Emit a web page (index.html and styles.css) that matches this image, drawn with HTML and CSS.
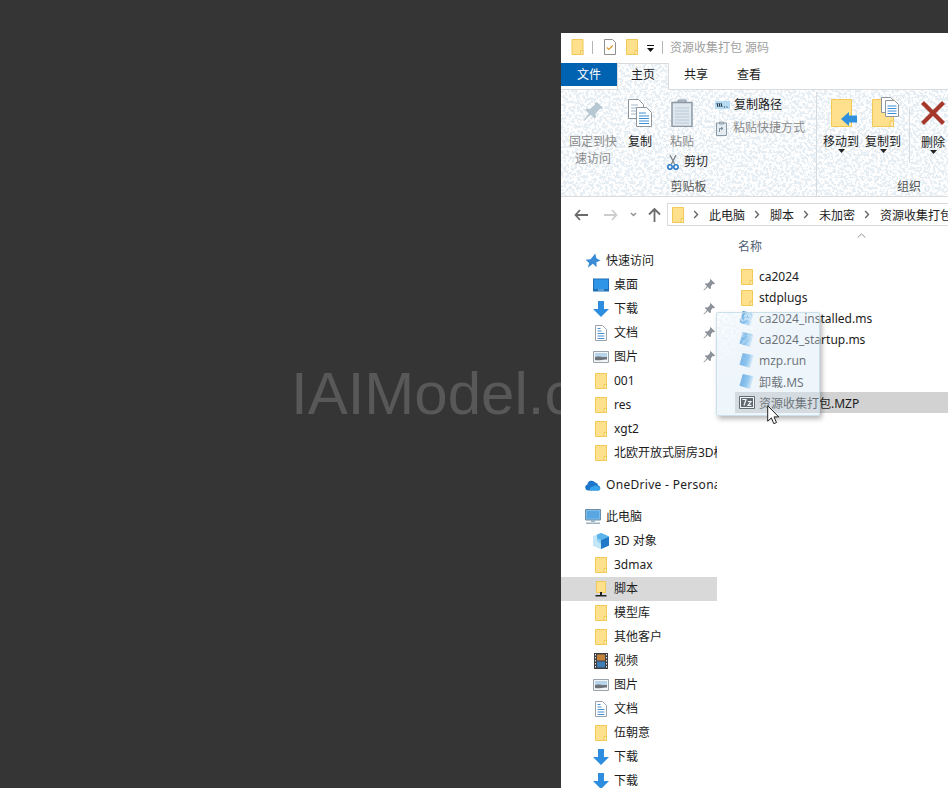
FILE: index.html
```html
<!DOCTYPE html>
<html lang="zh">
<head>
<meta charset="utf-8">
<title>资源收集打包 源码</title>
<link rel="stylesheet" href="styles.css">
</head>
<body>
<svg class="defs" width="0" height="0" aria-hidden="true">
  <defs>
    <filter id="speck" x="0" y="0" width="100%" height="100%" color-interpolation-filters="sRGB">
      <feTurbulence type="fractalNoise" baseFrequency="0.36" numOctaves="2" seed="7"/>
      <feColorMatrix values="0 0 0 0 1  0 0 0 0 1  0 0 0 0 1  16 0 0 0 -7.4"/>
    </filter>
    <linearGradient id="msBlue" x1="0" y1="0" x2="1" y2="0.3">
      <stop offset="0" stop-color="#1f7fd2"/>
      <stop offset="0.65" stop-color="#5fb0ea"/>
      <stop offset="1" stop-color="#e0eff9"/>
    </linearGradient>
    <symbol id="folder" viewBox="0 0 12 16">
      <path d="M.5.5h11v15H.5z" fill="#ffe08d" stroke="#f0c957"/>
      <path d="M9 11.5h2.500v4H9z" fill="#fdeab3" stroke="#f0c957"/>
    </symbol>
    <symbol id="star" viewBox="0 0 14 14">
      <path d="M9 .5l1 4.200 3.500 1.800-3.500 1.700.2 4.300-3.300-3L2.500 13 3.600 8.700 .5 6l4.300-.5z" fill="#3a8bd6"/>
    </symbol>
    <symbol id="desktop" viewBox="0 0 16 13">
      <path d="M0 0h16v13H0z" fill="#1d6fb8"/>
      <path d="M1 1h14v9.500H1z" fill="#2f95e6"/>
      <path d="M5 11h6v1H5z" fill="#9ccbef"/>
    </symbol>
    <symbol id="down" viewBox="0 0 16 16">
      <path d="M5 0h6v8h5l-8 8-8-8h5z" fill="#2f8de0"/>
    </symbol>
    <symbol id="doc" viewBox="0 0 12 16">
      <path d="M.5.500h7l4 4v11H.5z" fill="#fff" stroke="#9aa3ab"/>
      <path d="M2.500 3h3v1h-3zM2.500 5.500h4v1h-4zM2.500 8h7v1h-7zM2.500 10.500h7v1h-7zM2.500 13h7v1h-7z" fill="#4d92cf"/>
    </symbol>
    <symbol id="pics" viewBox="0 0 16 12">
      <path d="M.5.500h15v11H.5z" fill="#f2f5f7" stroke="#9aa3aa"/>
      <path d="M2 2h12v4H2z" fill="#b7d4ea"/>
      <path d="M2 6c3-1.500 6 .5 12 0v2.500C10 8 6 10 2 9z" fill="#6d7378"/>
    </symbol>
    <symbol id="cloud" viewBox="0 0 16 12">
      <path d="M3 11.500a3 3 0 0 1-.6-5.900 4.300 4.300 0 0 1 7.800-2.100 3.400 3.400 0 0 1 3 3 2.600 2.600 0 0 1 .3 5z" fill="#1d76c9"/>
      <path d="M5 11.500c-1-2 .8-4 3-4 1-1.500 5-1.500 5 0 2.800 0 3.200 3.600.6 4z" fill="#36a3ea"/>
    </symbol>
    <symbol id="pc" viewBox="0 0 16 16">
      <path d="M.5.500h15v10.500H.5z" fill="#7fbbe9" stroke="#6b8ea8"/>
      <path d="M2 2h12v7.500H2z" fill="#58a6e2"/>
      <path d="M6 11h4v2H6zM1 13.500h14v1.500H1z" fill="#9fb4c3"/>
    </symbol>
    <symbol id="cube" viewBox="0 0 16 16">
      <path d="M8 0l8 3.500v9L8 16 0 12.500v-9z" fill="#8fd0f3"/>
      <path d="M8 7l8-3.500v9L8 16z" fill="#1f78c8"/>
      <path d="M8 0l8 3.500L8 7 4 5.300V1.700z" fill="#5cb3ea"/>
      <path d="M0 3.500l4-1.800V8l4 3v5l-8-3.500z" fill="#c4e7f8"/>
    </symbol>
    <symbol id="netfolder" viewBox="0 0 12 16">
      <path d="M1.500.500h9v11h-9z" fill="#ffe08d" stroke="#f0c957"/>
      <path d="M5 11h2v3H5zM.5 14h11v1.500H.5z" fill="#222"/>
    </symbol>
    <symbol id="film" viewBox="0 0 14 16">
      <path d="M0 0h14v16H0z" fill="#3b3f44"/>
      <path d="M3 1.500h8v6H3z" fill="#c4823a"/>
      <path d="M3 8.500h8v6H3z" fill="#3f7fb5"/>
      <path d="M1 1h1v1.500H1zM1 4h1v1.500H1zM1 7h1v1.500H1zM1 10h1v1.500H1zM1 13h1v1.500H1zM12 1h1v1.500h-1zM12 4h1v1.500h-1zM12 7h1v1.500h-1zM12 10h1v1.500h-1zM12 13h1v1.500h-1z" fill="#e6e6e6"/>
    </symbol>
    <symbol id="pin" viewBox="0 0 12 12">
      <path d="M7.500 0L12 4.500 10.800 5.200 9.800 5l-2 2.300.2 2L7 10.200 4.700 8 1 11.500.500 11 4 7.300 1.800 5 2.700 4.200l2 .2L7 2.300 6.800 1z" fill="#8c9299"/>
    </symbol>
    <symbol id="ms" viewBox="0 0 16 17">
      <path d="M4 .5l11.500 2.500L12 16.500 .5 13z" fill="url(#msBlue)"/>
    </symbol>
    <symbol id="chev" viewBox="0 0 6 9">
      <path d="M1.200 1l3.300 3.500L1.200 8" fill="none" stroke="#666" stroke-width="1.400"/>
    </symbol>
    <symbol id="drop" viewBox="0 0 7 4">
      <path d="M0 0h7L3.500 4z" fill="#222"/>
    </symbol>
  </defs>
</svg>

<div class="desktop"><span class="watermark">IAIModel.c</span></div>

<main class="window">
  <header class="titlebar">
    <svg class="ic-title"><use href="#folder"/></svg>
    <span class="tb-sep"></span>
    <svg class="ic-check" viewBox="0 0 12 16">
      <path d="M.5.500h8l3 3v12H.5z" fill="#fff" stroke="#8f8f8f"/>
      <path d="M2.800 8.500l2 2 4-4" fill="none" stroke="#e09a2e" stroke-width="1.200"/>
    </svg>
    <svg class="ic-title2"><use href="#folder"/></svg>
    <svg class="ic-qa" viewBox="0 0 7 7"><path d="M0 0h7v1H0z M0 3h7L3.500 7z" fill="#111"/></svg>
    <span class="tb-sep tb-sep-2"></span>
    <span class="title-text">资源收集打包 源码</span>
  </header>

  <nav class="tabs">
    <span class="tab-file">文件</span>
    <span class="tab-home">
      <svg class="noise"><rect width="100%" height="100%" filter="url(#speck)"/></svg>
      <span class="raise">主页</span>
    </span>
    <span class="tab">共享</span>
    <span class="tab">查看</span>
  </nav>

  <section class="ribbon">
    <svg class="noise"><rect width="100%" height="100%" filter="url(#speck)"/></svg>
    <div class="rgroup rgroup-clip">
      <div class="rbody">
        <div class="rbtn rbtn-pin off">
          <svg class="rbig" viewBox="0 0 24 28">
            <path d="M16 3l6 6-1.500 1-1.500-.2-4.500 5 .4 3.400-1.400 1.300-3.800-3.700L3 22l-.6-.6 5.500-6.700-3.600-3.700 1.300-1.300 3.300.4 5-4.400L13.700 4z" fill="#b8c8d2"/>
          </svg>
          <span>固定到快<br>速访问</span>
        </div>
        <div class="rbtn rbtn-copy">
          <svg class="rbig" viewBox="0 0 24 28">
            <path d="M.5.500h10l5 5v14H.5z" fill="#fff" stroke="#8e979e"/>
            <path d="M3 6h7M3 9h10M3 12h10M3 15h10" stroke="#9fb9cf"/>
            <path d="M8.500 8.500h10l5 5v14h-15z" fill="#fff" stroke="#8e979e"/>
            <path d="M11 14h7M11 17h10M11 19.500h10M11 22h10M11 24.500h10" stroke="#3b8ed6"/>
          </svg>
          <span>复制</span>
        </div>
        <div class="rcol-paste">
          <div class="rbtn rbtn-paste off">
            <svg class="rbig" viewBox="0 0 22 28">
              <path d="M1 3.500h20v24H1z" fill="#dfe7ee" stroke="#8c99a5" stroke-width="1.500"/>
              <path d="M7 3h8V1H7z" fill="#c6ced6" stroke="#8c99a5"/>
              <path d="M4 9h14M4 12h14M4 15h14M4 18h14M4 21h14M4 24h14" stroke="#b9c9d6"/>
            </svg>
            <span>粘贴</span>
          </div>
          <div class="rsmall rsmall-cut">
            <svg class="ic-cut" viewBox="0 0 12 15">
              <path d="M3 0l4.500 9M9 0L4.500 9" fill="none" stroke="#7d858c" stroke-width="1.300"/>
              <circle cx="3" cy="12" r="2.200" fill="none" stroke="#2377c6" stroke-width="1.500"/>
              <circle cx="9" cy="12" r="2.200" fill="none" stroke="#2377c6" stroke-width="1.500"/>
            </svg>
            <span>剪切</span>
          </div>
        </div>
        <div class="rcol-small">
          <div class="rsmall rsmall-path">
            <svg class="ic-path" viewBox="0 0 15 8">
              <path d="M0 0h15v8H0z" fill="#b5dcf2"/>
              <path d="M2 2l1 4M4 2l1 4M6 2l1 4M9 6h1M11.500 6h1" stroke="#1c2a36"/>
            </svg>
            <span>复制路径</span>
          </div>
          <div class="rsmall rsmall-short off">
            <svg class="ic-short" viewBox="0 0 11 15">
              <path d="M.5 2h10v12.500H.500z" fill="#e3eaf0" stroke="#8c99a5"/>
              <path d="M3.500 1h4v2h-4z" fill="#c6ced6" stroke="#8c99a5"/>
              <path d="M3.500 11V7.500H7M5 6l2 1.500L5 9" fill="none" stroke="#7a8b99"/>
            </svg>
            <span>粘贴快捷方式</span>
          </div>
        </div>
      </div>
      <div class="rlabel">剪贴板</div>
    </div>

    <div class="rgroup rgroup-org">
      <div class="rbody">
        <div class="rbtn rbtn-org">
          <svg class="rbig rbig-move" viewBox="0 0 26 28">
            <path d="M.5.500h20v27H.500z" fill="#ffe08d" stroke="#f0c957"/>
            <path d="M17 22h3.500v5.500H17z" fill="#fdeab3" stroke="#f0c957"/>
            <path d="M10 20L18 13v3.500h8v7h-8V27z" fill="#2f90de"/>
          </svg>
          <span>移动到</span>
          <svg class="ic-drop"><use href="#drop"/></svg>
        </div>
        <div class="rbtn rbtn-org">
          <svg class="rbig rbig-copyto" viewBox="0 0 27 30">
            <path d="M.5 2.500h21v27H.500z" fill="#ffe08d" stroke="#f0c957"/>
            <path d="M18 24h3.500v5.500H18z" fill="#fdeab3" stroke="#f0c957"/>
            <path d="M9.500.500h9l3 3v12h-12z" fill="#fff" stroke="#8e979e"/>
            <path d="M13.500 3.500h9l4 4v12h-13z" fill="#fff" stroke="#8e979e"/>
            <path d="M15.500 9h9M15.500 11.500h9M15.500 14h9M15.500 16.500h9" stroke="#3b8ed6"/>
          </svg>
          <span>复制到</span>
          <svg class="ic-drop"><use href="#drop"/></svg>
        </div>
        <span class="rvsep"></span>
        <div class="rbtn rbtn-del">
          <svg class="rx" viewBox="0 0 26 26">
            <path d="M2.500 2.500l21 21M23.500 2.500l-21 21" stroke="#a5382b" stroke-width="4.200"/>
          </svg>
          <span>删除</span>
          <svg class="ic-drop"><use href="#drop"/></svg>
        </div>
      </div>
      <div class="rlabel">组织</div>
    </div>
  </section>

  <div class="addressrow">
    <svg class="nav nav-back" viewBox="0 0 14 12"><path d="M6 1L1.500 6 6 11M2 6h12" fill="none" stroke="#6b6b6b" stroke-width="1.800"/></svg>
    <svg class="nav nav-fwd" viewBox="0 0 14 12"><path d="M8 1l4.500 5L8 11M12 6H0" fill="none" stroke="#cdcdcd" stroke-width="1.800"/></svg>
    <svg class="nav nav-menu" viewBox="0 0 7 5"><path d="M1 1l2.500 2.500L6 1" fill="none" stroke="#8d8d8d" stroke-width="1.300"/></svg>
    <svg class="nav nav-up" viewBox="0 0 13 14"><path d="M1 6.500L6.500 1 12 6.500M6.500 2v12" fill="none" stroke="#6b6b6b" stroke-width="1.800"/></svg>
    <div class="addressbox">
      <svg class="ic-addr"><use href="#folder"/></svg>
      <svg class="crumb-chev"><use href="#chev"/></svg><span class="crumb">此电脑</span>
      <svg class="crumb-chev"><use href="#chev"/></svg><span class="crumb">脚本</span>
      <svg class="crumb-chev"><use href="#chev"/></svg><span class="crumb">未加密</span>
      <svg class="crumb-chev"><use href="#chev"/></svg><span class="crumb">资源收集打包 源码</span>
    </div>
  </div>

  <div class="content">
    <aside class="sidebar">
      <div class="row top"><svg class="ic"><use href="#star"/></svg><span class="lbl">快速访问</span></div>
      <div class="row"><svg class="ic"><use href="#desktop"/></svg><span class="lbl">桌面</span><svg class="ic-pin"><use href="#pin"/></svg></div>
      <div class="row"><svg class="ic"><use href="#down"/></svg><span class="lbl">下载</span><svg class="ic-pin"><use href="#pin"/></svg></div>
      <div class="row"><svg class="ic"><use href="#doc"/></svg><span class="lbl">文档</span><svg class="ic-pin"><use href="#pin"/></svg></div>
      <div class="row"><svg class="ic"><use href="#pics"/></svg><span class="lbl">图片</span><svg class="ic-pin"><use href="#pin"/></svg></div>
      <div class="row"><svg class="ic"><use href="#folder"/></svg><span class="lbl">001</span></div>
      <div class="row"><svg class="ic"><use href="#folder"/></svg><span class="lbl">res</span></div>
      <div class="row"><svg class="ic"><use href="#folder"/></svg><span class="lbl">xgt2</span></div>
      <div class="row"><svg class="ic"><use href="#folder"/></svg><span class="lbl">北欧开放式厨房3D模型</span></div>
      <div class="row top gap"><svg class="ic"><use href="#cloud"/></svg><span class="lbl lbl-wide">OneDrive - Personal</span></div>
      <div class="row top gap"><svg class="ic"><use href="#pc"/></svg><span class="lbl">此电脑</span></div>
      <div class="row"><svg class="ic"><use href="#cube"/></svg><span class="lbl">3D 对象</span></div>
      <div class="row"><svg class="ic"><use href="#folder"/></svg><span class="lbl">3dmax</span></div>
      <div class="row selected"><svg class="ic"><use href="#netfolder"/></svg><span class="lbl">脚本</span></div>
      <div class="row"><svg class="ic"><use href="#folder"/></svg><span class="lbl">模型库</span></div>
      <div class="row"><svg class="ic"><use href="#folder"/></svg><span class="lbl">其他客户</span></div>
      <div class="row"><svg class="ic"><use href="#film"/></svg><span class="lbl">视频</span></div>
      <div class="row"><svg class="ic"><use href="#pics"/></svg><span class="lbl">图片</span></div>
      <div class="row"><svg class="ic"><use href="#doc"/></svg><span class="lbl">文档</span></div>
      <div class="row"><svg class="ic"><use href="#folder"/></svg><span class="lbl">伍朝意</span></div>
      <div class="row"><svg class="ic"><use href="#down"/></svg><span class="lbl">下载</span></div>
      <div class="row"><svg class="ic"><use href="#down"/></svg><span class="lbl">下载</span></div>
    </aside>

    <section class="files">
      <div class="colhead">
        <span class="colname">名称</span>
        <svg class="sort" viewBox="0 0 9 5"><path d="M.7 4.500L4.500 1l3.800 3.500" fill="none" stroke="#8c8c8c"/></svg>
      </div>
      <div class="frow"><svg class="fic"><use href="#folder"/></svg><span>ca2024</span></div>
      <div class="frow"><svg class="fic"><use href="#folder"/></svg><span>stdplugs</span></div>
      <div class="frow"><svg class="fic-ms"><use href="#ms"/></svg><span>ca2024_installed.ms</span></div>
      <div class="frow"><svg class="fic-ms"><use href="#ms"/></svg><span>ca2024_startup.ms</span></div>
      <div class="frow"><svg class="fic-ms"><use href="#ms"/></svg><span>mzp.run</span></div>
      <div class="frow"><svg class="fic-ms"><use href="#ms"/></svg><span>卸载.MS</span></div>
      <div class="frow hot">
        <svg class="fic-7z" viewBox="0 0 16 13">
          <path d="M.5.500h15v12H.500z" fill="#fff" stroke="#111"/>
          <path d="M2 2h12v9H2z" fill="#111"/>
          <path d="M3.300 3.500h3.700L5 9.500M8.800 5.500h3.200L9 9.300h3.400" fill="none" stroke="#fff" stroke-width="1.200"/>
        </svg>
        <span>资源收集打包.MZP</span>
      </div>
    </section>

    <div class="ghost">
      <svg class="noise ghost-noise"><rect width="100%" height="100%" filter="url(#speck)"/></svg>
    </div>
    <svg class="cursor" viewBox="0 0 13 20">
      <path d="M.7.700v15.500l3.700-3.300 2.400 5.800 2.700-1.200-2.500-5.600h4.700z" fill="#fff" stroke="#222" stroke-width="1"/>
    </svg>
  </div>
</main>
</body>
</html>
```

FILE: styles.css
```css
* { box-sizing: border-box; }
html, body { margin: 0; height: 100%; overflow: hidden; }
body {
  display: flex;
  background: #353535;
  font-family: "Noto Sans", "Noto Sans CJK SC", sans-serif;
  font-size: 12px;
  color: #1c1c1c;
}
.defs { position: absolute; }

.desktop {
  flex: 0 0 561px;
  overflow: hidden;
  padding: 360px 0 0 291px;
  white-space: nowrap;
}
.watermark {
  display: block;
  font-family: "Liberation Sans", Arial, sans-serif;
  font-size: 60px;
  line-height: 68px;
  color: #585858;
}

.window {
  flex: 0 0 387px;
  height: 755px;
  margin-top: 33px;
  background: #fff;
  overflow: hidden;
}

/* title bar */
.titlebar { display: flex; align-items: center; height: 30px; padding: 0 0 2px 10px; white-space: nowrap; }
.ic-title { width: 13px; height: 16px; }
.tb-sep { width: 1px; height: 13px; margin-left: 8px; background: #b4b4b4; }
.ic-check { width: 12px; height: 16px; margin-left: 11px; }
.ic-title2 { width: 12px; height: 16px; margin-left: 10px; }
.ic-qa { width: 7px; height: 7px; margin-left: 9px; margin-top: 2px; }
.tb-sep-2 { margin-left: 8px; }
.title-text { margin-left: 7px; color: #a0a0a0; }

/* tabs */
.tabs { display: flex; height: 27px; border-bottom: 1px solid #dadbdc; white-space: nowrap; }
.tab-file {
  width: 56px; height: 23px;
  background: #0063b1; color: #fff;
  text-align: center; line-height: 23px;
}
.tab-home {
  position: relative;
  width: 52px; height: 27px;
  background: #e6eef4;
  border: 1px solid #dadbdc; border-bottom: 0;
  text-align: center; line-height: 22px;
}
.raise { position: relative; }
.tab { padding: 0 14px 0 15px; line-height: 23px; }

/* ribbon */
.ribbon {
  position: relative;
  display: flex;
  height: 107px;
  background: #e6eef4;
  border-bottom: 1px solid #dadbdc;
  overflow: hidden;
  white-space: nowrap;
}
.noise { position: absolute; left: 0; top: 0; width: 100%; height: 100%; }
.rgroup { position: relative; display: flex; flex-direction: column; flex: none; margin-top: 2px; }
.rgroup-clip { width: 256px; border-right: 1px solid #d5dde3; padding-left: 8px; }
.rgroup-org { width: 184px; padding-left: 3px; }
.rbody { display: flex; flex: 1; padding-top: 7px; }
.rlabel { height: 17px; margin-bottom: 1px; line-height: 17px; text-align: center; color: #555; }
.rgroup-clip .rlabel { padding-right: 8px; }
.rgroup-org .rlabel { padding-right: 3px; }
.rbtn { display: flex; flex-direction: column; align-items: center; line-height: 17px; text-align: center; flex: none; }
.off { color: #8a8a8a; }
.rbig { display: block; width: 24px; height: 28px; margin-bottom: 6px; flex: none; }
.rbtn-pin { width: 48px; }
.rbtn-copy { width: 46px; }
.rcol-paste { width: 52px; flex: none; }
.rbtn-paste { width: 38px; }
.rbtn-paste .rbig { width: 22px; }
.rsmall { display: flex; align-items: center; line-height: 18px; }
.rsmall-cut { margin: 3px 0 0 4px; }
.ic-cut { width: 12px; height: 15px; margin-right: 5px; }
.rcol-small { flex: none; }
.rsmall-path { height: 18px; margin-top: -3px; }
.rsmall-short { height: 18px; margin-top: 5px; }
.ic-path { width: 15px; height: 8px; margin-right: 4px; }
.ic-short { width: 11px; height: 15px; margin-right: 6px; margin-left: 1px; }

.rbtn-org { width: 42px; }
.rbig-move { width: 26px; margin-left: 6px; }
.rbig-copyto { width: 27px; height: 30px; margin: -2px 0 6px 5px; }
.ic-drop { display: block; width: 7px; height: 4px; margin-top: -1px; }
.rvsep { width: 1px; height: 56px; margin: 8px 10px 0 5px; background: #d5dde3; flex: none; }
.rbtn-del { width: 26px; }
.rx { display: block; width: 26px; height: 26px; margin: 1px 0 8px; flex: none; }

/* address bar */
.addressrow { display: flex; align-items: center; height: 33px; padding-top: 2px; }
.nav { flex: none; }
.nav-back { width: 14px; height: 12px; margin-left: 13px; }
.nav-fwd { width: 14px; height: 12px; margin-left: 16px; }
.nav-menu { width: 7px; height: 5px; margin-left: 12px; }
.nav-up { width: 13px; height: 14px; margin-left: 11px; }
.addressbox {
  display: flex; align-items: center; flex: none;
  width: 320px; height: 23px;
  margin-left: 6px; padding-left: 4px;
  border: 1px solid #d9d9d9;
  white-space: nowrap;
}
.ic-addr { width: 12px; height: 16px; margin-right: 9px; flex: none; }
.crumb-chev { width: 6px; height: 9px; flex: none; margin-right: 10px; }
.crumb { margin-right: 9px; }

/* content */
.content { position: relative; display: flex; }
.sidebar { flex: 0 0 156px; width: 156px; min-width: 0; padding-top: 19px; }
.row { display: flex; align-items: center; height: 24px; padding-left: 32px; white-space: nowrap; overflow: hidden; }
.row.top { padding-left: 24px; }
.row.gap { margin-top: 8px; }
.row.selected { background: #d9d9d9; }
.ic { width: 16px; height: 16px; margin-right: 5px; flex: none; }
.lbl { flex: 0 1 auto; min-width: 0; overflow: hidden; padding-bottom: 2px; }
.lbl-wide { letter-spacing: 0.3px; }
.ic-pin { width: 12px; height: 12px; flex: none; margin-left: auto; margin-right: 2px; }

.files { flex: 1; min-width: 0; }
.colhead { display: flex; height: 36px; padding: 9px 0 0 21px; line-height: 16px; color: #4e6074; }
.sort { width: 9px; height: 5px; margin: -6px 0 0 95px; flex: none; }
.frow {
  display: flex; align-items: center;
  height: 21px;
  margin-left: 18px; padding-left: 6px;
  white-space: nowrap;
}
.frow.hot { background: #d2d2d2; padding-left: 4px; }
.fic { width: 12px; height: 16px; margin-right: 6px; flex: none; }
.fic-ms { width: 15px; height: 17px; margin: 0 5px 0 -2px; flex: none; }
.fic-7z { width: 16px; height: 13px; margin-right: 4px; flex: none; }

/* drag preview */
.ghost {
  position: absolute;
  left: 155px; top: 82px;
  width: 104px; height: 104px;
  background: rgba(215, 232, 245, 0.42);
  border: 1px solid rgba(190, 215, 230, 0.7);
  border-radius: 2px;
  box-shadow: 2px 3px 5px rgba(0, 0, 0, 0.28);
  overflow: hidden;
}
.ghost-noise {
  -webkit-mask-image: linear-gradient(135deg, rgba(0, 0, 0, 0.8) 0, transparent 38%);
  mask-image: linear-gradient(135deg, rgba(0, 0, 0, 0.8) 0, transparent 38%);
}
.cursor {
  position: absolute;
  left: 206px; top: 175px;
  width: 13px; height: 20px;
}
```
